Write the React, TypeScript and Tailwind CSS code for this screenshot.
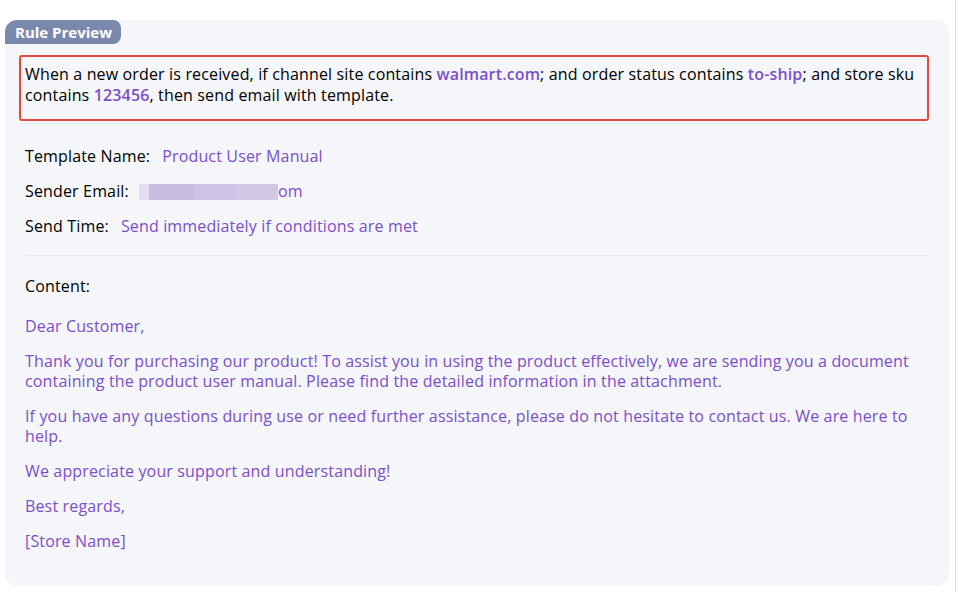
import React from "react";

const purple = "text-[#7b4fc9]";

export default function App() {
  return (
    <div
      className="w-full h-[592px] bg-white pt-[20px] pl-[5px] pr-[6px] border-r border-[#e3e1ee] tracking-[0.15px]"
      style={{ fontFamily: '"Open Sans", "Noto Sans", sans-serif' }}
    >
      <div className="h-[566px] rounded-xl bg-[#f5f6fa] flex flex-col">
        <div className="self-start h-6 w-[116px] pl-[10px] flex items-center rounded-tl-xl rounded-tr-lg rounded-br-lg bg-[#7b88ae] text-white text-[15px] font-bold tracking-normal">
          Rule Preview
        </div>
        <div className="pl-[14px] pr-[20px] pt-[11px]">
          <div className="border-2 border-[#e5483f] rounded-[3px] pl-[4px] pr-2 pt-[7px] pb-[13px] text-[16px] leading-[21px] text-black">
            When a new order is received, if channel site contains{" "}
            <span className={`${purple} font-semibold`}>walmart.com</span>; and order status contains{" "}
            <span className={`${purple} font-semibold`}>to-ship</span>; and store sku contains{" "}
            <span className={`${purple} font-semibold`}>123456</span>, then send email with template.
          </div>
        </div>
        <div className="ml-[20px] mr-[20px] mt-[2px] border-t border-[#e6e6ec]" />
        <div className="pl-[20px] pr-[20px] pt-[22px] pb-[18px] flex flex-col gap-[14px] text-[16px] leading-[21px]">
          <div className="flex">
            <span className="text-black">Template Name:</span>
            <span className={`${purple} ml-[12px]`}>Product User Manual</span>
          </div>
          <div className="flex items-center">
            <span className="text-black">Sender Email:</span>
            <span className="ml-[10px] relative flex items-center h-[21px]">
              <span className="flex h-[16px]">
                <span className="w-[10px] bg-[#e4def0]" />
                <span className="w-[45px] bg-[#c9bce3]" />
                <span className="w-[40px] bg-[#cec3e6]" />
                <span className="w-[44px] bg-[#d1c8e8]" />
              </span>
              <span className={purple}>om</span>
            </span>
          </div>
          <div className="flex">
            <span className="text-black">Send Time:</span>
            <span className={`${purple} ml-[12px]`}>Send immediately if conditions are met</span>
          </div>
        </div>
        <div className="ml-[20px] mr-[20px] border-t border-[#e6e6ec]" />
        <div className="pl-[20px] pr-[20px] pt-[20px] text-[16px]">
          <div className="leading-[21px] text-black">Content:</div>
          <div className={`${purple} leading-[20px] mt-[19px] flex flex-col gap-[15px]`}>
            <p>Dear Customer,</p>
            <p>
              Thank you for purchasing our product! To assist you in using the product effectively, we are sending you a document containing the product user manual. Please find the detailed information in the attachment.
            </p>
            <p>
              If you have any questions during use or need further assistance, please do not hesitate to contact us. We are here to help.
            </p>
            <p>We appreciate your support and understanding!</p>
            <p>Best regards,</p>
            <p>[Store Name]</p>
          </div>
        </div>
      </div>
    </div>
  );
}
